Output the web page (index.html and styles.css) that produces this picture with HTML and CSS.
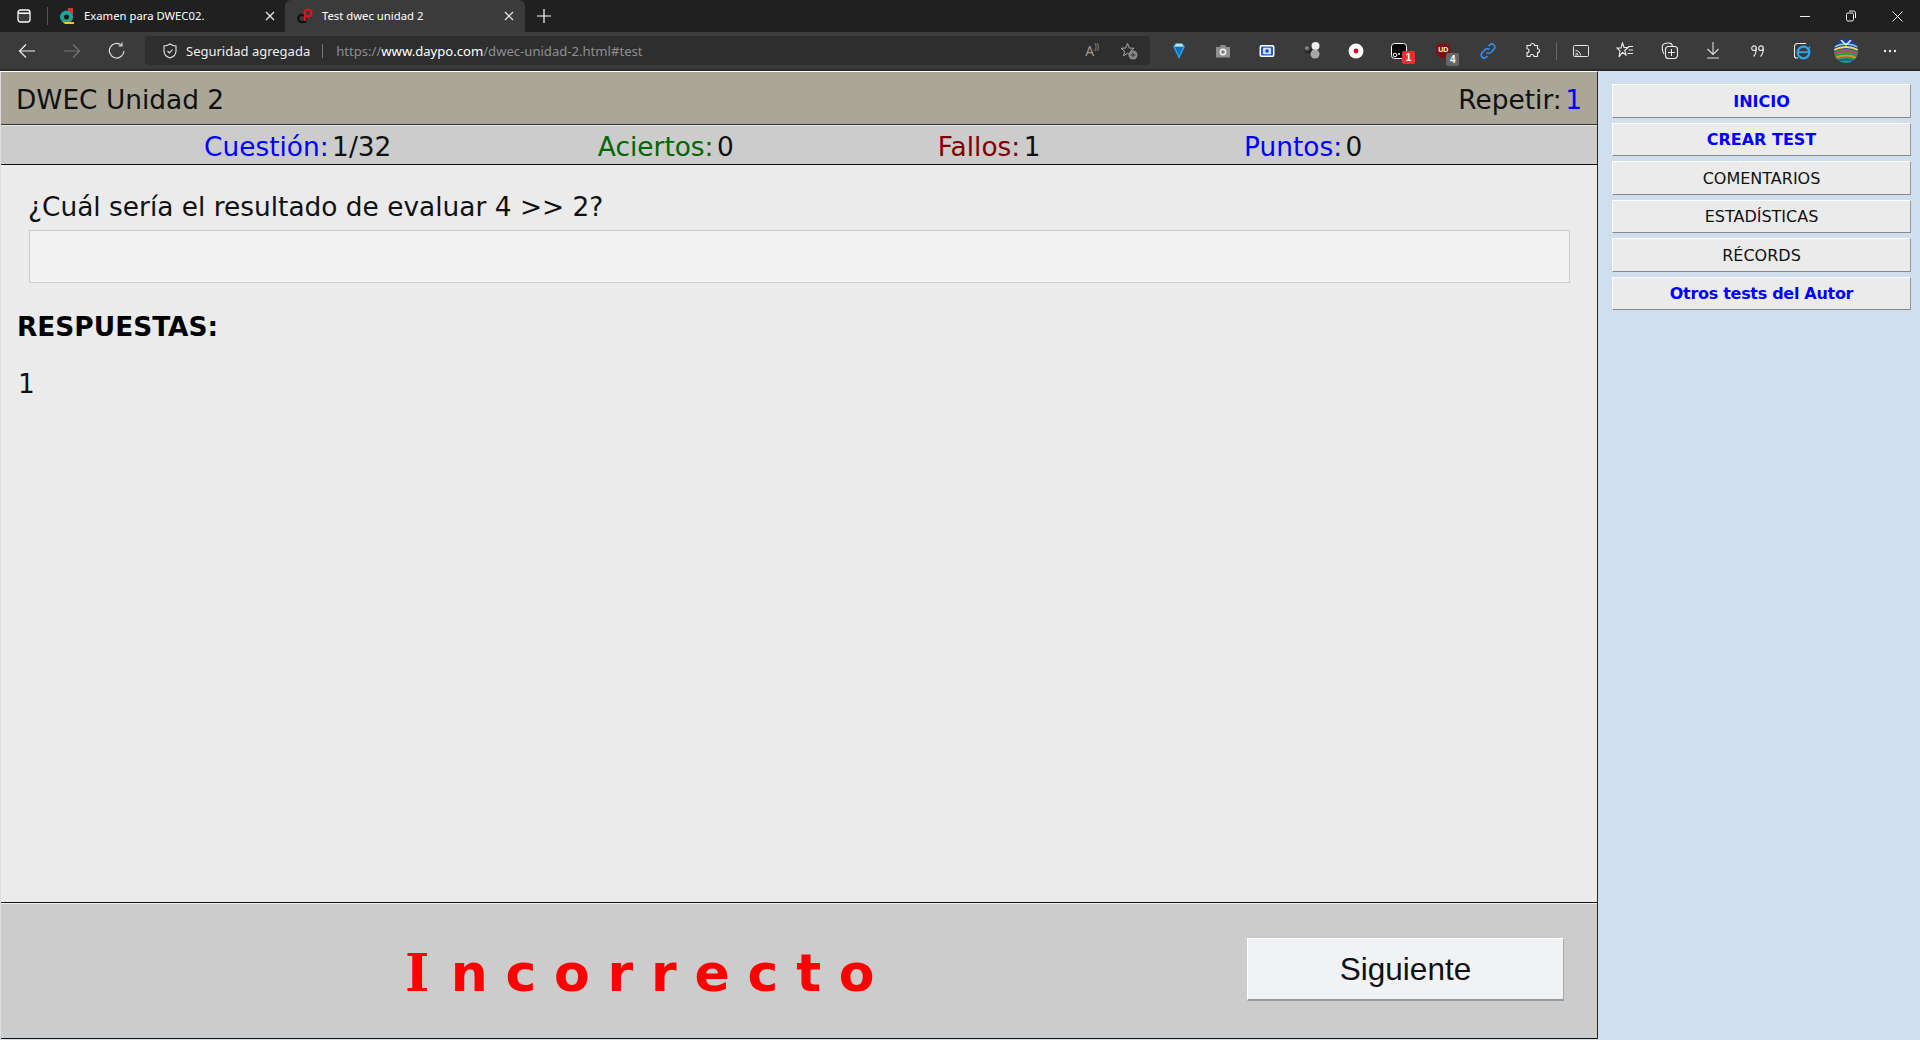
FILE: index.html
```html
<!DOCTYPE html>
<html lang="es">
<head>
<meta charset="utf-8">
<title>Test dwec unidad 2</title>
<link rel="stylesheet" href="styles.css">
</head>
<body>
<div class="tabbar">
  <svg class="tab-actions" width="14" height="14" viewBox="0 0 14 14"><rect x="1" y="1" width="12" height="12" rx="2.5" fill="none" stroke="#fff" stroke-width="1.3"/><path d="M1 4.2h12" stroke="#fff" stroke-width="1.6"/><rect x="2" y="5" width="10" height="7" fill="#fff" opacity=".12"/></svg>
  <span class="tab-sep"></span>
  <div class="tab">
    <svg class="favicon" width="16" height="16" viewBox="0 0 16 16"><rect x="9" y="0" width="5" height="7" fill="#d5322c"/><circle cx="7.500" cy="9" r="6.500" fill="#1fa39a"/><circle cx="7.500" cy="9" r="2.500" fill="#1b1b1b"/><path d="M4 14h11v2H6z" fill="#e5c93c"/></svg>
    <span class="tab-title">Examen para DWEC02.</span>
    <svg class="tab-close" width="10" height="10" viewBox="0 0 10 10"><path d="M1 1l8 8M9 1l-8 8" stroke="#eee" stroke-width="1.2"/></svg>
  </div>
  <div class="tab tab-active">
    <svg class="favicon" width="16" height="16" viewBox="0 0 16 16"><circle cx="5" cy="10.500" r="3.700" fill="none" stroke="#111" stroke-width="2.400"/><path d="M8 15V5" stroke="#111" stroke-width="2"/><circle cx="11" cy="5" r="3.500" fill="none" stroke="#e0141c" stroke-width="2.200"/><path d="M8 5v8" stroke="#e0141c" stroke-width="2"/></svg>
    <span class="tab-title">Test dwec unidad 2</span>
    <svg class="tab-close" width="10" height="10" viewBox="0 0 10 10"><path d="M1 1l8 8M9 1l-8 8" stroke="#eee" stroke-width="1.2"/></svg>
  </div>
  <svg class="tab-new" width="14" height="14" viewBox="0 0 14 14"><path d="M7 0v14M0 7h14" stroke="#fff" stroke-width="1.2"/></svg>
  <div class="win-controls">
    <svg width="10" height="10" viewBox="0 0 10 10"><path d="M0 5.500h10" stroke="#eee"/></svg>
    <svg width="10" height="12" viewBox="0 0 10 12"><rect x=".5" y="3" width="7" height="8" rx="1.500" fill="none" stroke="#eee"/><path d="M3 1h4.500a2 2 0 0 1 2 2v5" fill="none" stroke="#eee"/></svg>
    <svg width="11" height="11" viewBox="0 0 11 11"><path d="M.5.500l10 10M10.500.500l-10 10" stroke="#eee"/></svg>
  </div>
</div>

<div class="toolbar">
  <div class="nav">
    <svg width="18" height="16" viewBox="0 0 18 16"><path d="M17 8H2M8 1.500 1.500 8 8 14.500" fill="none" stroke="#eee" stroke-width="1.2"/></svg>
    <svg width="18" height="16" viewBox="0 0 18 16"><path d="M1 8h15M10 1.500 16.500 8 10 14.500" fill="none" stroke="#777" stroke-width="1.2"/></svg>
    <svg width="18" height="18" viewBox="0 0 18 18"><path d="M13.500 3.200A7.300 7.300 0 1 0 16 9" fill="none" stroke="#ddd" stroke-width="1.200"/><path d="M14 .5v3.500h-3.500" fill="none" stroke="#ddd" stroke-width="1.200"/></svg>
  </div>
  <div class="address">
    <svg width="14" height="16" viewBox="0 0 14 16"><path d="M7 1c2 1.300 3.800 2 6 2v5c0 3.500-2.500 5.800-6 7-3.500-1.200-6-3.500-6-7V3c2.200 0 4-.7 6-2z" fill="none" stroke="#e8e8e8" stroke-width="1.100"/><path d="M4.500 8l2 2 3-3.500" fill="none" stroke="#e8e8e8" stroke-width="1.100"/></svg>
    <span class="secure">Seguridad agregada</span>
    <span class="addr-sep"></span>
    <span class="url">https://<b class="host">www.daypo.com</b>/dwec-unidad-2.html#test</span>
    <span class="addr-fill"></span>
    <span class="read">A<sup class="read-waves">))</sup></span>
    <svg class="addr-star" width="18" height="18" viewBox="0 0 18 18"><path d="M7.500 1.500 9.300 6l4.700.3-3.600 3 1.100 4.500-4-2.500-4 2.500 1.200-4.500L1 6.300 5.700 6z" fill="none" stroke="#aaa" stroke-width="1"/><circle cx="13" cy="13" r="4.500" fill="#8a8a8a"/><path d="M13 10.500v5M10.500 13h5" stroke="#333" stroke-width="1"/></svg>
  </div>
  <div class="extensions">
    <span class="ext"><svg width="14" height="18" viewBox="0 0 14 18"><path d="M1 4.500 4 1h6l3 3.500L7 17z" fill="#29a3e8"/><path d="M3 5h8L7 14z" fill="#0c6fc0"/><path d="M4 2h6l1.500 2.500h-9z" fill="#b8e6ff"/></svg></span>
    <span class="ext"><svg width="16" height="14" viewBox="0 0 16 14"><path d="M1 3h3.500L6 1h4l1.500 2H15v10.500H1z" fill="#8f8f8f"/><circle cx="8" cy="8" r="3.400" fill="#eee"/><circle cx="8" cy="8" r="1.800" fill="#777"/></svg></span>
    <span class="ext"><svg width="16" height="14" viewBox="0 0 16 14"><rect x=".5" y="1" width="15" height="12" rx="2" fill="#fff"/><rect x="2" y="2.500" width="12" height="9" rx="1" fill="#1a5fd0"/><rect x="4" y="3.800" width="8" height="6.400" rx="1" fill="#cfe0ff"/><circle cx="8" cy="7" r="1.700" fill="#1a3fc0"/></svg></span>
    <span class="ext"><svg width="16" height="17" viewBox="0 0 16 17"><defs><radialGradient id="dk" cx=".35" cy=".3" r=".8"><stop offset="0" stop-color="#aaa"/><stop offset=".5" stop-color="#333"/><stop offset="1" stop-color="#111"/></radialGradient></defs><circle cx="11.500" cy="4" r="4" fill="#ececec"/><circle cx="11" cy="12" r="4.500" fill="#a8a8a8"/><circle cx="4" cy="7.500" r="3.700" fill="url(#dk)"/></svg></span>
    <span class="ext"><svg width="16" height="16" viewBox="0 0 16 16"><circle cx="8" cy="8" r="7.500" fill="#fff"/><circle cx="8" cy="8" r="2.400" fill="#e0001b"/></svg></span>
    <span class="ext"><svg class="shift-l" width="16" height="16" viewBox="0 0 16 16"><rect x=".5" y=".5" width="15" height="15" rx="3" fill="#000" stroke="#fff"/><circle cx="4" cy="12" r="1.800" fill="none" stroke="#fff"/><circle cx="8" cy="11" r="1" fill="#fff"/></svg><span class="badge badge-red">1</span></span>
    <span class="ext"><svg class="shift-l" width="16" height="17" viewBox="0 0 16 17"><path d="M8 1l7 2v6c0 3.500-3 6-7 7.500C4 15 1 12.500 1 9V3z" fill="#800f14"/></svg><span class="ud">UD</span><span class="badge badge-grey">4</span></span>
    <span class="ext"><svg width="18" height="18" viewBox="0 0 18 18"><path d="M7.500 10.500a3 3 0 0 0 4.300 0l3.200-3.300a3 3 0 0 0-4.300-4.200L9.500 4.200M10.500 7.500a3 3 0 0 0-4.300 0L3 10.800a3 3 0 0 0 4.300 4.200l1.200-1.200" fill="none" stroke="#3a8be8" stroke-width="1.700"/></svg></span>
    <span class="ext"><svg width="17" height="17" viewBox="0 0 17 17"><path d="M3 3.500h3.500a2 2 0 1 1 4 0H13.500v3.200a2 2 0 1 1 0 4v3.800H10a2 2 0 1 0-4 0H3v-3.800a2 2 0 1 0 0-4z" fill="none" stroke="#eee" stroke-width="1.100"/></svg></span>
    <span class="tool-sep"></span>
    <span class="ext"><svg width="16" height="12" viewBox="0 0 16 12"><rect x=".5" y=".5" width="15" height="11" rx="1" fill="none" stroke="#e8e8e8"/><path d="M2.500 5.500a5 5 0 0 1 5 5M2.500 8a2.500 2.500 0 0 1 2.500 2.500" fill="none" stroke="#e8e8e8"/><circle cx="3" cy="10" r=".8" fill="#e8e8e8"/></svg></span>
    <span class="ext"><svg width="18" height="17" viewBox="0 0 18 17"><path d="M6.500 1 8 5.500h4L8.800 8.300 10 13 6.500 10.300 3 15l1-6L1 6h4z" fill="none" stroke="#eee" stroke-width="1.100"/><path d="M12 4.500h5M12.500 8h4.500M11.500 11.500H17" stroke="#eee"/></svg></span>
    <span class="ext"><svg width="17" height="17" viewBox="0 0 17 17"><path d="M3 12C1.500 10 1 6 1.500 3.500 2 1.500 5 1 8 1c2 0 3 1 3.500 3" fill="none" stroke="#eee" stroke-width="1.100"/><rect x="4.500" y="4.500" width="12" height="12" rx="3" fill="#3b3b3b" stroke="#eee" stroke-width="1.100"/><path d="M10.500 7v7M7 10.500h7" stroke="#eee"/></svg></span>
    <span class="ext"><svg width="14" height="17" viewBox="0 0 14 17"><path d="M7 0v12M1.500 7 7 12.500 12.500 7M1 16h12" fill="none" stroke="#ddd" stroke-width="1.100"/></svg></span>
    <span class="ext"><svg width="13" height="12" viewBox="0 0 13 12"><g fill="none" stroke="#e4e4e4" stroke-width="1.200"><circle cx="3" cy="3.200" r="2.300"/><path d="M5.300 3.200C5.300 6.500 4.500 9.500 2.500 11.500"/><circle cx="10" cy="3.200" r="2.300"/><path d="M12.300 3.200C12.300 6.500 11.500 9.500 9.500 11.500"/></g></svg></span>
    <span class="ext"><svg width="18" height="18" viewBox="0 0 18 18"><path d="M5 16H3.500A2 2 0 0 1 1.500 14V4.500A3 3 0 0 1 4.500 1.500H13" fill="none" stroke="#eee" stroke-width="1.100"/><circle cx="10.500" cy="10.500" r="5.800" fill="none" stroke="#2aa8ea" stroke-width="2.200"/><path d="M5.500 10.200h10" stroke="#2aa8ea" stroke-width="1.800"/><path d="M16 4.500c1.500 1.500-.5 2.800-2 3" fill="none" stroke="#2aa8ea" stroke-width="1.300"/></svg></span>
    <span class="ext"><svg width="24" height="24" viewBox="0 0 24 24"><defs><clipPath id="av"><circle cx="12" cy="12" r="12"/></clipPath></defs><g clip-path="url(#av)" fill="none"><rect width="24" height="24" fill="#1f3fa8"/><path d="M0 13c6-4 18-4 24 0v11H0z" fill="#2e9e4a"/><path d="M0 8c7-4 17-4 24 0" stroke="#8fd0f0" stroke-width="1.500"/><path d="M0 11c7-4 17-4 24 0" stroke="#f3e04a" stroke-width="1.800"/><path d="M0 15c7-4 17-4 24 0" stroke="#d9366e" stroke-width="1.800"/><path d="M1 19c7-3 15-3 22 0" stroke="#f08a24" stroke-width="1.800"/><path d="M3 22c6-2 12-2 18 0" stroke="#2a50c8" stroke-width="1.800"/><path d="M6 0l6 6 6-6" stroke="#dff" stroke-width="1.500"/></g></svg></span>
    <span class="ext"><svg width="14" height="4" viewBox="0 0 14 4"><circle cx="2" cy="2" r="1.200" fill="#eee"/><circle cx="7" cy="2" r="1.200" fill="#eee"/><circle cx="12" cy="2" r="1.200" fill="#eee"/></svg></span>
  </div>
</div>

<div class="page">
  <main class="main">
    <header class="head">
      <span>DWEC Unidad 2</span>
      <span>Repetir:<span class="val val-blue">1</span></span>
    </header>
    <div class="stats">
      <span class="stat stat-q"><span class="blue">Cuestión:</span><span class="val">1/32</span></span>
      <span class="stat stat-a"><span class="green">Aciertos:</span><span class="val">0</span></span>
      <span class="stat stat-f"><span class="red">Fallos:</span><span class="val">1</span></span>
      <span class="stat stat-p"><span class="blue">Puntos:</span><span class="val">0</span></span>
    </div>
    <section class="content">
      <p class="question">¿Cuál sería el resultado de evaluar 4 &gt;&gt; 2?</p>
      <div class="qbox"></div>
      <h2 class="answers-title">RESPUESTAS:</h2>
      <p class="answer">1</p>
    </section>
    <footer class="foot">
      <div class="result"><span class="result-i">I</span>ncorrecto</div>
      <button class="next">Siguiente</button>
    </footer>
  </main>
  <aside class="side">
    <a class="side-btn strong">INICIO</a>
    <a class="side-btn strong">CREAR TEST</a>
    <a class="side-btn">COMENTARIOS</a>
    <a class="side-btn">ESTADÍSTICAS</a>
    <a class="side-btn">RÉCORDS</a>
    <a class="side-btn strong tight">Otros tests del Autor</a>
  </aside>
</div>
</body>
</html>
```
FILE: styles.css
```css
* { box-sizing: border-box; }
html, body { margin: 0; height: 1040px; overflow: hidden; }
body { display: flex; flex-direction: column; background: #cfdfee; font-family: "DejaVu Sans", sans-serif; }

.tabbar { height: 32px; background: #202020; display: flex; align-items: center; padding-left: 17px; flex: none; font-family: "Noto Sans", sans-serif; color: #fff; }
.tab-actions { flex: none; }
.tab-sep { width: 1px; height: 18px; background: #555; margin-left: 16px; }
.tab { width: 237px; height: 32px; display: flex; align-items: center; padding: 0 10px 0 11px; gap: 8px; }
.tab-active { width: 240px; background: #3b3b3b; border-radius: 6px 6px 0 0; padding: 0 11px 0 12px; }
.favicon { flex: none; margin-right: 1px; }
.tab-title { flex: 1; font-size: 11.300px; white-space: nowrap; padding-bottom: 2px; }
.tab-close { flex: none; }
.tab-new { margin-left: 12px; }
.win-controls { margin-left: auto; display: flex; align-items: center; gap: 36px; padding-right: 17px; }

.toolbar { height: 39px; background: #3b3b3b; display: flex; align-items: center; flex: none; border-bottom: 2px solid #2b2b2b; font-family: "Noto Sans", sans-serif; }
.nav { display: flex; align-items: center; gap: 27px; padding-left: 18px; width: 145px; flex: none; }
.address { width: 1005px; height: 29px; background: #2e2e2e; border-radius: 4px; display: flex; align-items: center; padding: 0 12px 0 18px; flex: none; }
.secure { font-size: 13px; color: #eee; margin-left: 9px; }
.addr-sep { width: 1px; height: 14px; background: #777; margin: 0 13px 0 12px; }
.url { font-size: 13.100px; color: #8f8f8f; }
.host { font-weight: 400; color: #fff; }
.addr-fill { flex: 1; }
.read { font-size: 14px; color: #999; margin-right: 21px; }
.read-waves { font-size: 8px; }
.addr-star { flex: none; }
.extensions { display: flex; align-items: center; padding-left: 7px; }
.ext { position: relative; width: 44.200px; height: 26px; display: flex; align-items: center; justify-content: center; flex: none; }
.shift-l { margin-right: 2px; }
.tool-sep { width: 1px; height: 18px; background: #666; margin: 0 2px 0 1px; flex: none; }
.badge { position: absolute; right: 7px; bottom: 0; width: 13px; height: 13px; border-radius: 2px; font: 700 10px/13px "Liberation Sans", sans-serif; text-align: center; color: #fff; }
.badge-red { background: #ea2e2e; }
.badge-grey { background: #666; right: 7px; bottom: -2px; }
.ud { position: absolute; left: 16px; top: 7px; font: 700 7px/9px "Liberation Sans", sans-serif; color: #fff; }

.page { flex: 1; display: flex; min-height: 0; }
.main { width: 1598px; height: 968px; display: flex; flex-direction: column; background: #ebebeb; border-top: 1px solid #fff; border-right: 1px solid #222; border-left: 1px solid #ddd; flex: none; }
.head { height: 53px; background: #aba798; border-bottom: 1px solid #333; display: flex; justify-content: space-between; align-items: center; padding: 2px 15px 0; font-size: 26.400px; color: #111; flex: none; }
.val { margin-left: 3.500px; color: #111; }
.val-blue { color: #00f; }
.stats { height: 40px; background: #ccc; border-bottom: 1px solid #111; border-top: 1px solid #e8e8e8; display: flex; align-items: center; padding-top: 2px; font-size: 26.400px; color: #111; flex: none; }
.stat { flex: none; }
.stat-q { margin-left: 203px; }
.stat-a { margin-left: 206.500px; }
.stat-f { margin-left: 204px; }
.stat-p { margin-left: 203.500px; }
.blue { color: #00f; }
.green { color: #060; }
.red { color: #800000; }
.content { flex: 1; padding: 26px 0 0; min-height: 0; }
.question { margin: 0 0 0 27px; font-size: 26.400px; line-height: 32px; color: #111; }
.qbox { margin: 7px 27px 0 28px; height: 53px; background: #f2f2f2; border: 1px solid #ccc; }
.answers-title { margin: 28px 0 0 16px; font-size: 26.400px; line-height: 32px; font-weight: 700; color: #000; }
.answer { margin: 25px 0 0 17px; font-size: 26.400px; line-height: 32px; color: #111; }
.foot { height: 137px; background: #ccc; border-top: 1px solid #111; border-bottom: 1px solid #111; box-shadow: inset 0 1px 0 #eee; display: flex; align-items: center; flex: none; }
.result { margin-left: 404px; width: 842px; padding-top: 4px; font: 700 52px/60px "DejaVu Sans", sans-serif; letter-spacing: 17.800px; color: #f00; }
.result-i { font-family: "DejaVu Serif", serif; margin-right: 3.500px; }
.next { width: 317px; height: 63px; margin-bottom: 2px; background: #f1f2f6; border: 0; border-top: 1px solid #fff; border-left: 1px solid #fff; border-right: 1px solid #aaa; border-bottom: 2px solid #999; font: 31.500px "Liberation Sans", sans-serif; color: #111; padding: 0; }

.side { flex: 1; display: flex; flex-direction: column; padding: 13px 9px 0 14px; gap: 5px; }
.side-btn { height: 33.500px; padding-top: 1px; background: #ebebeb; border-top: 1px solid #fff; border-left: 1px solid #fff; border-right: 1px solid #999; border-bottom: 1px solid #888; display: flex; align-items: center; justify-content: center; font: 16px "DejaVu Sans", sans-serif; color: #111; }
.strong { font-weight: 700; color: #00f; }
.tight { letter-spacing: -.3px; }
```
